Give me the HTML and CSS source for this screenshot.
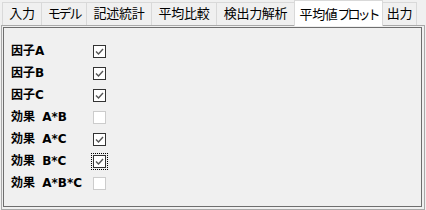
FILE: index.html
```html
<!DOCTYPE html>
<html lang="ja">
<head>
<meta charset="utf-8">
<link rel="stylesheet" href="styles.css">
</head>
<body>
<div class="window">
  <div class="tabs">
    <div class="tab w1">入力</div>
    <div class="tab w2"><span class="kana">モデル</span></div>
    <div class="tab w3">記述統計</div>
    <div class="tab w3">平均比較</div>
    <div class="tab w4">検出力解析</div>
    <div class="tab active w5">平均値<span class="kana2">プロット</span></div>
    <div class="tab w6">出力</div>
  </div>
  <div class="panel">
    <div class="group">
      <div class="rows">
        <div class="label">因子A</div>
        <span class="cb on"><svg viewBox="0 0 11 11" width="11" height="11"><polyline points="2,5.5 4.5,8 9,3" /></svg></span>
        <div class="label">因子B</div>
        <span class="cb on"><svg viewBox="0 0 11 11" width="11" height="11"><polyline points="2,5.5 4.5,8 9,3" /></svg></span>
        <div class="label">因子C</div>
        <span class="cb on"><svg viewBox="0 0 11 11" width="11" height="11"><polyline points="2,5.5 4.5,8 9,3" /></svg></span>
        <div class="label">効果 A*B</div>
        <span class="cb off"></span>
        <div class="label">効果 A*C</div>
        <span class="cb on"><svg viewBox="0 0 11 11" width="11" height="11"><polyline points="2,5.5 4.5,8 9,3" /></svg></span>
        <div class="label">効果 B*C</div>
        <span class="cb on focus"><svg viewBox="0 0 11 11" width="11" height="11"><polyline points="2,5.5 4.5,8 9,3" /></svg></span>
        <div class="label">効果 A*B*C</div>
        <span class="cb off"></span>
      </div>
    </div>
  </div>
</div>
</body>
</html>
```
FILE: styles.css
```css
* { box-sizing: border-box; }
html, body {
  margin: 0;
  padding: 0;
  background: #f0f0f0;
}
body {
  width: 426px;
  height: 210px;
  overflow: hidden;
  font-family: "Noto Sans CJK JP", "Noto Sans", sans-serif;
  color: #000;
}
.window {
  width: 426px;
  height: 210px;
}
.tabs {
  display: flex;
  align-items: flex-end;
  height: 25px;
  padding-left: 2px;
  position: relative;
  z-index: 2;
}
.tab {
  height: 23px;
  border: 1px solid #d9d9d9;
  border-bottom: none;
  margin-right: -1px;
  background: #f0f0f0;
  font-size: 13px;
  line-height: 20px;
  text-align: center;
  white-space: nowrap;
  letter-spacing: -0.3px;
}
.kana { letter-spacing: -2.2px; }
.kana2 { letter-spacing: -3px; }
.tab.active {
  height: 26px;
  margin-bottom: -1px;
  background: #fff;
  border-color: #d9d9d9;
  position: relative;
  z-index: 3;
  line-height: 25px;
}
.w1 { width: 40px; }
.w2 { width: 46px; }
.w3 { width: 66px; }
.w4 { width: 79px; }
.w5 { width: 89px; }
.w6 { width: 35px; }
.panel {
  margin-left: 1px;
  width: 424px;
  height: 185px;
  border: 1px solid #a9a9a9;
  padding: 1px 2px 2px 1px;
  background: #f0f0f0;
}
.group {
  width: 100%;
  height: 100%;
  border: 1px solid #6e6e6e;
  padding: 12px 0 0 7px;
}
.rows {
  display: grid;
  grid-template-columns: 82px 13px;
  grid-auto-rows: 22px;
  align-items: center;
}
.label {
  font-family: "DejaVu Sans", "Noto Sans CJK JP", sans-serif;
  font-size: 12px;
  font-weight: bold;
  white-space: pre;
  word-spacing: 3px;
  line-height: 22px;
}
.cb {
  display: flex;
  align-items: center;
  justify-content: center;
  width: 13px;
  height: 13px;
  border: 1px solid #333;
  background: #fff;
}
.cb.off {
  border-color: #cccccc;
}
.cb svg polyline {
  fill: none;
  stroke: #555;
  stroke-width: 1.4;
}
.cb.focus {
  outline: 1px dotted #000;
  outline-offset: 1px;
}
```
